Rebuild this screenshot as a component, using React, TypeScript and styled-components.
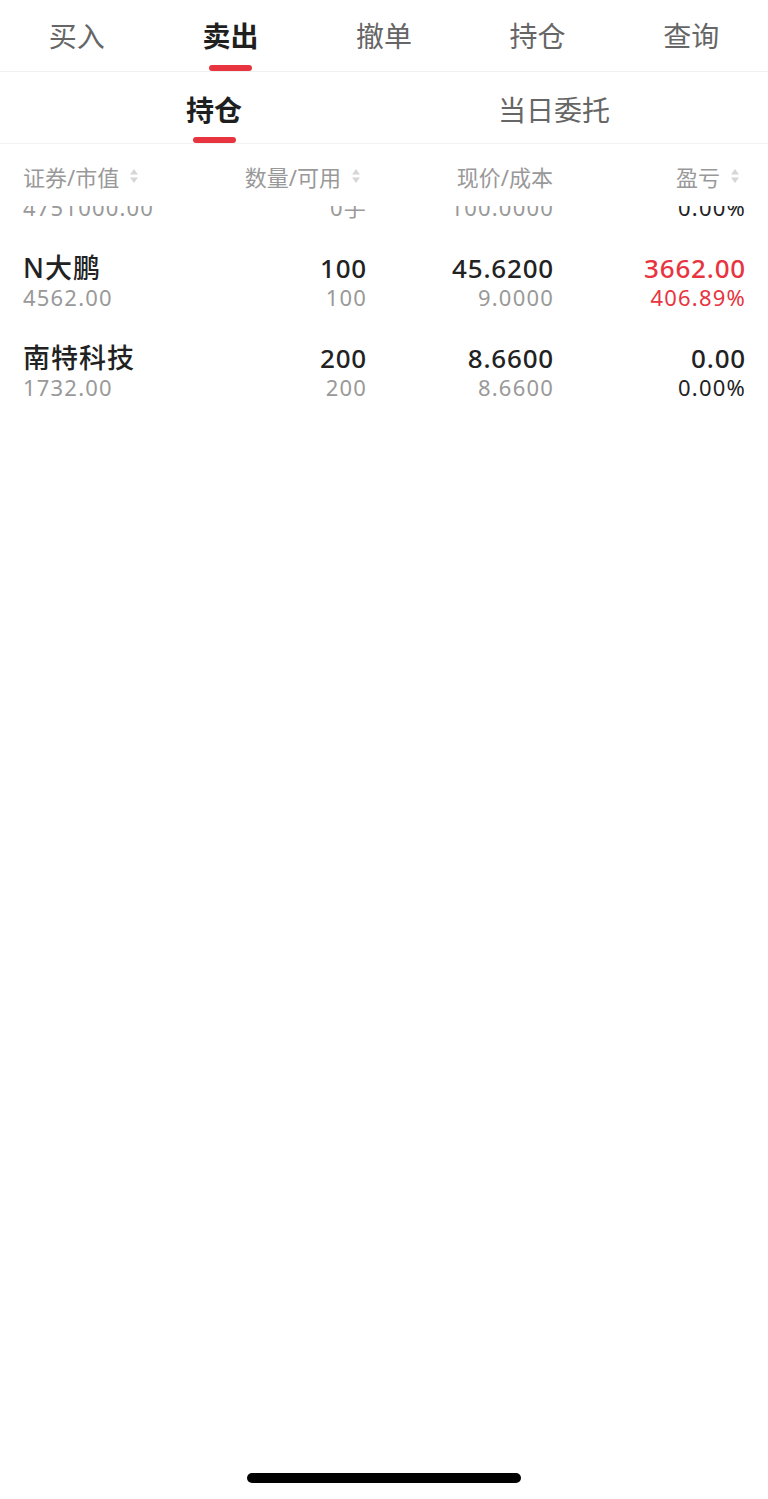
import React from 'react'
import styled, { createGlobalStyle } from 'styled-components'

const GlobalStyle = createGlobalStyle`
  html, body {
    margin: 0;
    padding: 0;
    background: #fff;
  }
  body {
    font-family: "Noto Sans", "Noto Sans CJK SC", sans-serif;
    -webkit-font-smoothing: antialiased;
  }
`

interface Position {
  name: string
  marketValue: string
  quantity: string
  available: string
  price: string
  cost: string
  profit: string
  profitRate: string
  up?: boolean
}

const positions: Position[] = [
  {
    name: '中国平安',
    marketValue: '4751000.00',
    quantity: '0手',
    available: '0手',
    price: '100.0000',
    cost: '100.0000',
    profit: '0.00',
    profitRate: '0.00%'
  },
  {
    name: 'N大鹏',
    marketValue: '4562.00',
    quantity: '100',
    available: '100',
    price: '45.6200',
    cost: '9.0000',
    profit: '3662.00',
    profitRate: '406.89%',
    up: true
  },
  {
    name: '南特科技',
    marketValue: '1732.00',
    quantity: '200',
    available: '200',
    price: '8.6600',
    cost: '8.6600',
    profit: '0.00',
    profitRate: '0.00%'
  }
]

const mainTabs = ['买入', '卖出', '撤单', '持仓', '查询']
const subTabs = ['持仓', '当日委托']

const SortIcon: React.FC = () => (
  <SortSvg viewBox="0 0 10 16" width="10" height="16">
    <path d="M5 1 L9 6.5 H1 Z" fill="#d6d6d6" />
    <path d="M5 15 L9 9.5 H1 Z" fill="#d6d6d6" />
  </SortSvg>
)

const App: React.FC = () => {
  const activeMain = 1
  const activeSub = 0
  // list is scrolled a bit, first row sits under the header
  const scrollOffset = 59

  return (
    <Page>
      <GlobalStyle />
      <MainTabBar>
        {mainTabs.map((t, i) => (
          <MainTab key={t} $active={i === activeMain}>
            {t}
          </MainTab>
        ))}
      </MainTabBar>
      <SubTabBar>
        {subTabs.map((t, i) => (
          <SubTab key={t} $active={i === activeSub}>
            {t}
          </SubTab>
        ))}
      </SubTabBar>
      <TableHeader>
        <HeadCell>
          证券/市值
          <SortIcon />
        </HeadCell>
        <HeadCell $right $sortable>
          数量/可用
          <SortIcon />
        </HeadCell>
        <HeadCell $right>现价/成本</HeadCell>
        <HeadCell $right $sortable>
          盈亏
          <SortIcon />
        </HeadCell>
      </TableHeader>
      <ListViewport>
        <List style={{ marginTop: -scrollOffset }}>
          {positions.map((p) => (
            <Row key={p.name}>
              <Cell>
                <NameText>{p.name}</NameText>
                <SubText>{p.marketValue}</SubText>
              </Cell>
              <Cell $right>
                <MainText>{p.quantity}</MainText>
                <SubText>{p.available}</SubText>
              </Cell>
              <Cell $right>
                <MainText>{p.price}</MainText>
                <SubText>{p.cost}</SubText>
              </Cell>
              <Cell $right>
                <MainText $color={p.up ? '#e8343f' : undefined}>{p.profit}</MainText>
                <SubText $color={p.up ? '#e8343f' : '#222'}>{p.profitRate}</SubText>
              </Cell>
            </Row>
          ))}
        </List>
      </ListViewport>
      <HomeIndicatorWrap>
        <HomeIndicator />
      </HomeIndicatorWrap>
    </Page>
  )
}

const Page = styled.div`
  height: 1499px;
  display: flex;
  flex-direction: column;
  background: #fff;
  overflow: hidden;
`

const MainTabBar = styled.div`
  display: flex;
  height: 72px;
  border-bottom: 1px solid #f0f0f0;
  box-sizing: border-box;
`

const MainTab = styled.div<{ $active?: boolean }>`
  flex: 1;
  position: relative;
  display: flex;
  align-items: center;
  justify-content: center;
  padding-bottom: 1px;
  font-size: 28px;
  color: ${(p) => (p.$active ? '#1f1f1f' : '#666')};
  font-weight: ${(p) => (p.$active ? 700 : 400)};

  &::after {
    content: '';
    display: ${(p) => (p.$active ? 'block' : 'none')};
    position: absolute;
    bottom: 0;
    left: 50%;
    width: 43px;
    height: 6px;
    margin-left: -21px;
    border-radius: 3px;
    background: #e8343f;
  }
`

const SubTabBar = styled.div`
  display: flex;
  height: 72px;
  padding: 0 44px;
  border-bottom: 1px solid #f2f2f2;
  box-sizing: border-box;
`

const SubTab = styled(MainTab)`
  padding-bottom: 0;
  padding-top: 2px;
`

const TableHeader = styled.div`
  display: grid;
  grid-template-columns: 183px 160px 187px 192px;
  height: 62px;
  padding: 2px 23px 0;
  box-sizing: border-box;
  align-items: center;
  background: #fff;
  position: relative;
  z-index: 1;
`

const HeadCell = styled.div<{ $right?: boolean; $sortable?: boolean }>`
  display: flex;
  align-items: center;
  justify-content: ${(p) => (p.$right ? 'flex-end' : 'flex-start')};
  padding-right: ${(p) => (p.$sortable ? '5px' : '0')};
  font-size: 22px;
  color: #999;
  white-space: nowrap;
`

const SortSvg = styled.svg`
  margin-left: 10px;
  flex-shrink: 0;
`

const ListViewport = styled.div`
  flex: 1;
  overflow: hidden;
`

const List = styled.div`
  display: flex;
  flex-direction: column;
`

const Row = styled.div`
  display: grid;
  grid-template-columns: 183px 160px 187px 192px;
  padding: 16px 23px;
`

const Cell = styled.div<{ $right?: boolean }>`
  display: flex;
  flex-direction: column;
  align-items: ${(p) => (p.$right ? 'flex-end' : 'flex-start')};
  margin-right: ${(p) => (p.$right ? '-1px' : '0')};
  white-space: nowrap;
`

const MainText = styled.div<{ $color?: string }>`
  font-size: 26px;
  line-height: 30px;
  letter-spacing: 0.8px;
  color: ${(p) => p.$color || '#222'};
  font-weight: 500;
`

const NameText = styled(MainText)`
  font-size: 27px;
  letter-spacing: 1px;
`

const SubText = styled.div<{ $color?: string }>`
  font-size: 22px;
  line-height: 28px;
  letter-spacing: 1.2px;
  color: ${(p) => p.$color || '#999'};
`

const HomeIndicatorWrap = styled.div`
  height: 50px;
  display: flex;
  justify-content: center;
  padding-top: 24px;
  box-sizing: border-box;
`

const HomeIndicator = styled.div`
  width: 274px;
  height: 10px;
  border-radius: 5px;
  background: #000;
`

export default App
